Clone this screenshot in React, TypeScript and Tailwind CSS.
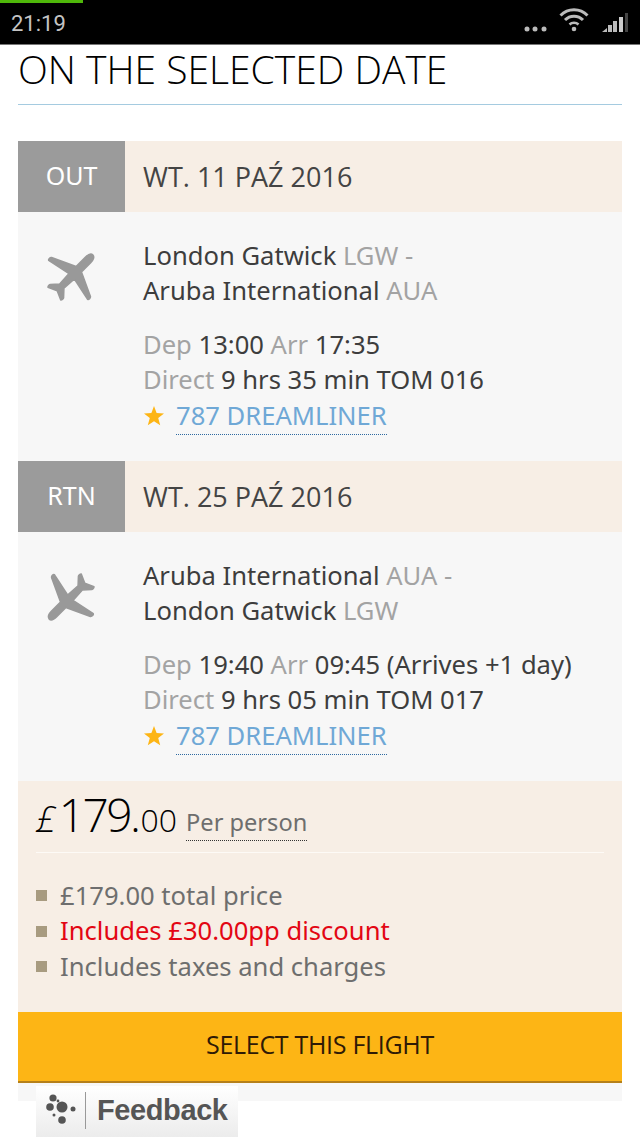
import React from 'react';

function PlaneIcon({ angle }: { angle: number }) {
  return (
    <svg width="64" height="64" viewBox="-32 -32 64 64" className="block">
      <g transform={`rotate(${angle})`} fill="#999999" stroke="#999999" strokeWidth="1.5" strokeLinejoin="round">
        <path d="M0 -31 C2.6 -31 3.8 -27.5 3.8 -24 L3.8 -11 L27.5 0 C28.8 1 28.8 3.5 27.5 4 L3.8 -1 L3 13 L9.5 20 C10.2 21 9.8 23 9 23.5 L0 19.5 L-9 23.5 C-9.8 23 -10.2 21 -9.5 20 L-3 13 L-3.8 -1 L-27.5 4 C-28.8 3.5 -28.8 1 -27.5 0 L-3.8 -11 L-3.8 -24 C-3.8 -27.5 -2.6 -31 0 -31 Z" />
      </g>
    </svg>
  );
}

function Star() {
  return (
    <svg width="22" height="22" viewBox="0 0 22 22" className="block">
      <path d="M11 1 L13.6 8 L21 8.4 L15.2 13 L17.2 20.2 L11 16.2 L4.8 20.2 L6.8 13 L1 8.4 L8.4 8 Z" fill="#fdb515" />
    </svg>
  );
}

function StatusBar() {
  return (
    <div className="relative h-[45px] bg-black border-b border-b-[#777] flex items-center justify-between pl-[11px] pr-[10px] font-['Roboto',sans-serif]">
      <div className="absolute left-0 top-0 w-[83px] h-[3px] bg-[#4fb80a]" />
      <span className="text-[22px] text-[#c4c4c4] mt-[3px]">21:19</span>
      <svg width="120" height="32" viewBox="0 0 120 32" className="block mt-[2px]">
        <circle cx="17" cy="22" r="2.5" fill="#bbb" />
        <circle cx="25" cy="22" r="2.5" fill="#bbb" />
        <circle cx="34" cy="22" r="2.5" fill="#bbb" />
        <path d="M50.5 8.5 A19 19 0 0 1 77.5 8.5" fill="none" stroke="#bbb" strokeWidth="3" />
        <path d="M55 13 A12.5 12.5 0 0 1 73 13" fill="none" stroke="#bbb" strokeWidth="3" />
        <path d="M59.5 17.5 A6.5 6.5 0 0 1 68.5 17.5" fill="none" stroke="#bbb" strokeWidth="2.6" />
        <circle cx="64" cy="22" r="2.3" fill="#bbb" />
        <path d="M92 25 L97 25 L97 21 Z" fill="#bbb" />
        <rect x="98" y="18" width="4" height="7" fill="#bbb" />
        <rect x="103" y="14" width="4" height="11" fill="#bbb" />
        <rect x="109" y="10" width="4" height="15" fill="#ccc" />
        <rect x="115" y="6" width="3" height="19" fill="#444" />
      </svg>
    </div>
  );
}

interface LegProps {
  label: string;
  date: string;
  angle: number;
  from: [string, string];
  to: [string, string];
  dep: string;
  arr: string;
  duration: string;
}

function Leg({ label, date, angle, from, to, dep, arr, duration }: LegProps) {
  return (
    <div>
      <div className="flex h-[71px] bg-[#f7eee5]">
        <div className="w-[107px] bg-[#9b9b9b] text-white flex items-center justify-center text-[25px] pb-[2px]">{label}</div>
        <div className="pl-[18px] pt-[2px] flex items-center text-[27px] text-[#444] font-['Open_Sans',sans-serif]">{date}</div>
      </div>
      <div className="h-[249px] bg-[#f7f7f7] flex">
        <div className="w-[107px] pl-[21px] pt-[33px] shrink-0">
          <PlaneIcon angle={angle} />
        </div>
        <div className="pl-[18px] pt-[26px] text-[25.6px] leading-[35px] text-[#3d3d3d]">
          <div>
            {from[0]} <span className="text-[#a3a3a3]">{from[1]} -</span>
          </div>
          <div>
            {to[0]} <span className="text-[#a3a3a3]">{to[1]}</span>
          </div>
          <div className="mt-[19px]">
            <span className="text-[#a3a3a3]">Dep</span> {dep} <span className="text-[#a3a3a3]">Arr</span> {arr}
          </div>
          <div>
            <span className="text-[#a3a3a3]">Direct</span> {duration}
          </div>
          <div className="flex items-start mt-[1px]">
            <div className="pt-[7px]">
              <Star />
            </div>
            <span className="ml-[11px] text-[#6fa8d6] h-[37px] border-b border-dotted border-b-[#2f6aa0]">787 DREAMLINER</span>
          </div>
        </div>
      </div>
    </div>
  );
}

export default function App() {
  const bullets = [
    { text: '£179.00 total price', color: 'text-[#6e6e6e]' },
    { text: 'Includes £30.00pp discount', color: 'text-[#e30613]' },
    { text: 'Includes taxes and charges', color: 'text-[#6e6e6e]' },
  ];

  return (
    <div className="relative w-[640px] h-[1137px] overflow-hidden bg-white font-['Noto_Sans',sans-serif]">
      <StatusBar />
      <div className="px-[18px]">
        <h1 className="font-['Open_Sans',sans-serif] font-light text-[39px] leading-[48px] text-black h-[60px] border-b border-b-[#a5cbe0]">
          ON THE SELECTED DATE
        </h1>
        <div className="mt-[36px]">
          <Leg
            label="OUT"
            date="WT. 11 PAŹ 2016"
            angle={45}
            from={['London Gatwick', 'LGW']}
            to={['Aruba International', 'AUA']}
            dep="13:00"
            arr="17:35"
            duration="9 hrs 35 min TOM 016"
          />
          <Leg
            label="RTN"
            date="WT. 25 PAŹ 2016"
            angle={225}
            from={['Aruba International', 'AUA']}
            to={['London Gatwick', 'LGW']}
            dep="19:40"
            arr="09:45 (Arrives +1 day)"
            duration="9 hrs 05 min TOM 017"
          />
          <div className="h-[231px] bg-[#f7eee5] px-[18px]">
            <div className="h-[72px] border-b border-b-[#fdfaf6] flex items-end pb-[11px]">
              <span className="font-['Open_Sans',sans-serif] font-light text-black leading-none flex items-baseline mb-[4px]">
                <span className="text-[36px] italic">£</span>
                <span className="text-[46px] ml-[3px] tracking-[-2.5px]">179.</span>
                <span className="text-[32px] ml-[2px]">00</span>
              </span>
              <span className="ml-[9px] text-[23.6px] leading-[26px] pb-[5px] text-[#6e6e6e] border-b border-dotted border-b-[#333]">Per person</span>
            </div>
            <ul className="pt-[25px]">
              {bullets.map((item) => (
                <li key={item.text} className={`flex items-center h-[35.5px] text-[25.6px] ${item.color}`}>
                  <span className="w-[11px] h-[11px] bg-[#a89b80] mr-[13px]" />
                  {item.text}
                </li>
              ))}
            </ul>
          </div>
          <button className="block w-full h-[71px] bg-[#fdb515] border-b-2 border-b-[#b5801a] pb-[3px] text-[25px] text-[#2f1a05] font-['Open_Sans',sans-serif] tracking-[-0.3px]">
            SELECT THIS FLIGHT
          </button>
          <div className="h-[18px] bg-[#f7f7f7]" />
        </div>
      </div>
      <div className="absolute left-[36px] top-[1086px] w-[202px] h-[51px] bg-gradient-to-b from-white to-[#ececec] flex items-start pt-[6px]">
        <svg width="36" height="36" viewBox="0 0 36 36" className="ml-[9px] block">
          <g fill="#555">
            <circle cx="8" cy="6" r="3.6" />
            <circle cx="5" cy="15" r="3.8" />
            <circle cx="17" cy="15" r="5.5" />
            <circle cx="28" cy="17" r="2.5" />
            <circle cx="9" cy="23" r="1.5" />
            <circle cx="17" cy="28" r="3.8" />
            <circle cx="13" cy="9" r="1.4" />
          </g>
        </svg>
        <div className="w-px h-[37px] bg-[#999] ml-[4px]" />
        <span className="ml-[11px] font-['Liberation_Sans',sans-serif] font-bold text-[29px] leading-[36px] text-[#555] tracking-[-0.4px]">Feedback</span>
      </div>
    </div>
  );
}
